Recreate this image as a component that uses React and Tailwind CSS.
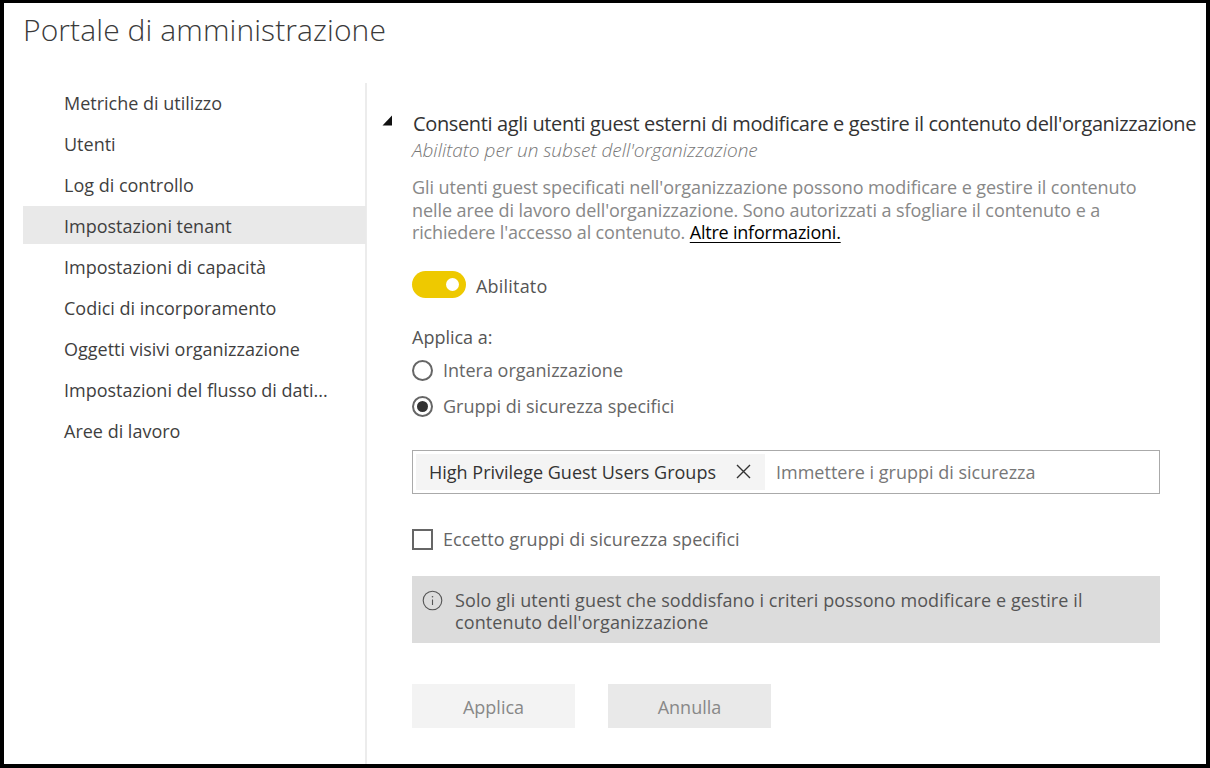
const nav = ["Metriche di utilizzo","Utenti","Log di controllo","Impostazioni tenant","Impostazioni di capacità","Codici di incorporamento","Oggetti visivi organizzazione","Impostazioni del flusso di dati...","Aree di lavoro"];
const font = { fontFamily: '"Open Sans", "Noto Sans", sans-serif' };

export default function App() {
  return (
    <div style={font} className="w-[1210px] h-[768px] bg-white border-black border-t-[3px] border-l-[4px] border-r-[4px] border-b-[4px] overflow-hidden flex flex-col">
      <h1 className="ml-[19px] mt-[7px] h-[40px] leading-[40px] text-[30px] font-light text-[#3a3a3a] tracking-[0.1px]">Portale di amministrazione</h1>
      <div className="flex ml-[19px] mt-[33px] flex-1">
        <nav className="w-[344px] border-r-2 border-[#ececec] flex flex-col gap-[2.95px]">
          {nav.map((n) => (
            <div key={n} className={`h-[38px] leading-[40px] pl-[41px] w-[343px] text-[18px] text-[#3f3f3f] ${n === "Impostazioni tenant" ? "bg-[#e9e9e9]" : ""}`}>{n}</div>
          ))}
        </nav>
        <main className="flex-1 relative pl-[45px] pt-[27px]">
          <svg className="absolute left-[15px] top-[32px]" width="12" height="11" viewBox="0 0 12 11"><path d="M10 0.5V10.5H0.5Z" fill="#111" /></svg>
          <div className="text-[20px] leading-[28px] tracking-[-0.37px] text-[#333] pl-[1px] whitespace-nowrap">Consenti agli utenti guest esterni di modificare e gestire il contenuto dell'organizzazione</div>
          <div className="text-[19px] leading-[24px] italic font-light text-[#777] whitespace-nowrap">Abilitato per un subset dell'organizzazione</div>
          <p className="mt-[14.4px] w-[748px] text-[18px] leading-[22.5px] tracking-[-0.07px] text-[#888] whitespace-nowrap">
            Gli utenti guest specificati nell'organizzazione possono modificare e gestire il contenuto<br />
            nelle aree di lavoro dell'organizzazione. Sono autorizzati a sfogliare il contenuto e a<br />
            <span className="tracking-[-0.15px]">richiedere l'accesso al contenuto.</span> <a className="text-black underline underline-offset-[3px] tracking-[-0.22px]">Altre informazioni.</a>
          </p>
          <div className="flex items-center mt-[26.7px] h-[28px]">
            <div className="w-[54px] h-[27px] rounded-full bg-[#eec900] flex items-center justify-end pr-[7px]">
              <div className="w-[13px] h-[13px] rounded-full bg-white" />
            </div>
            <span className="ml-[10px] pt-[3px] text-[18px] tracking-[0.2px] text-[#555]">Abilitato</span>
          </div>
          <div className="mt-[25px] h-[26px] leading-[26px] text-[18px] text-[#555]">Applica a:</div>
          <div className="mt-[7px] flex items-center h-[28px] text-[18px] text-[#666]">
            <div className="w-[21px] h-[21px] rounded-full border-2 border-[#666]" />
            <span className="ml-[10px]">Intera organizzazione</span>
          </div>
          <div className="mt-[8px] flex items-center h-[28px] text-[18px] text-[#666]">
            <div className="w-[21px] h-[21px] rounded-full border-2 border-[#666] flex items-center justify-center"><div className="w-[11px] h-[11px] rounded-full bg-[#333]" /></div>
            <span className="ml-[10px]">Gruppi di sicurezza specifici</span>
          </div>
          <div className="mt-[29px] w-[748px] h-[44px] border border-[#aaa] flex items-center pl-[3px]">
            <div className="h-[36px] w-[349px] bg-[#f4f4f4] flex items-center pl-[13px] text-[18px] text-[#333]">
              <span className="whitespace-nowrap pt-[1px]">High Privilege Guest Users Groups</span>
              <svg className="ml-[20px] shrink-0" width="15" height="15" viewBox="0 0 15 15"><path d="M1 1L14 14M14 1L1 14" stroke="#333" strokeWidth="1.4" fill="none" /></svg>
            </div>
            <span className="ml-[11px] pt-[1px] text-[18px] text-[#777] whitespace-nowrap">Immettere i gruppi di sicurezza</span>
          </div>
          <div className="mt-[32px] flex items-center h-[28px] text-[18px] text-[#666]">
            <div className="w-[21px] h-[21px] border-2 border-[#666]" />
            <span className="ml-[10px] tracking-[0.08px]">Eccetto gruppi di sicurezza specifici</span>
          </div>
          <div className="mt-[22px] w-[748px] h-[67px] bg-[#dcdcdc] flex items-start pl-[10px] pt-[13px] text-[18px] leading-[22px] tracking-[0.1px] text-[#555]">
            <svg className="shrink-0 mt-[1px]" width="21" height="21" viewBox="0 0 21 21" fill="none"><circle cx="10.5" cy="10.5" r="9.3" stroke="#555" strokeWidth="1.1" /><path d="M10.5 9.5V15" stroke="#555" strokeWidth="1.1" /><circle cx="10.5" cy="6.7" r="0.8" fill="#555" /></svg>
            <span className="ml-[12px] whitespace-nowrap">Solo gli utenti guest che soddisfano i criteri possono modificare e gestire il<br />contenuto dell'organizzazione</span>
          </div>
          <div className="mt-[41px] flex gap-[33px]">
            <button className="w-[163px] h-[44px] pt-[3px] bg-[#f3f3f3] text-[18px] text-[#888]">Applica</button>
            <button className="w-[163px] h-[44px] pt-[3px] bg-[#e9e9e9] text-[18px] text-[#888]">Annulla</button>
          </div>
        </main>
      </div>
    </div>
  );
}
